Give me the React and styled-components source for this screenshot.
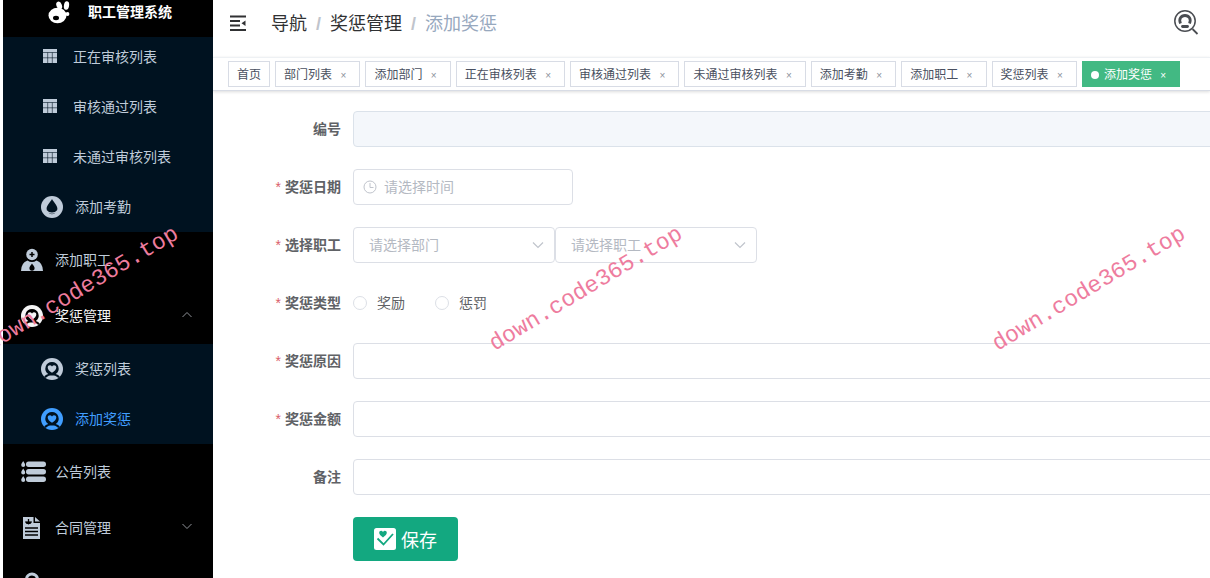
import React, { useState } from "react";
import styled, { createGlobalStyle, css } from "styled-components";

const GlobalStyle = createGlobalStyle`
  * { box-sizing: border-box; }
  body {
    margin: 0;
    background: #fff;
    font-family: "Liberation Sans", "Noto Sans CJK SC", sans-serif;
    color: #606266;
  }
  button, input, select { font-family: inherit; }
`;

const Shell = styled.div`
  position: relative;
  display: flex;
  height: 100vh;
  padding-left: 3px;
  overflow: hidden;
`;

const Sidebar = styled.aside`
  flex: 0 0 210px;
  overflow: hidden;
  background: #000;
`;

const Brand = styled.header`
  position: relative;
  z-index: 1;
  display: flex;
  align-items: flex-start;
  gap: 16px;
  height: 37px;
  margin-bottom: -5px;
  padding-left: 44px;
  background: #000;
`;

const BrandTitle = styled.h1`
  margin: 0;
  color: #fff;
  font-size: 14px;
  font-weight: 700;
  line-height: 24px;
`;

const SubMenu = styled.div`
  background: #001220;
`;

const menuColors = { normal: "#bfcbd9", open: "#f4f4f5", active: "#409eff" };

const MenuLink = styled.a`
  display: flex;
  align-items: center;
  gap: 12px;
  height: ${(p) => (p.$nested ? 50 : 56)}px;
  padding: 0 20px 0 ${(p) => (p.$nested ? 38 : 18)}px;
  color: ${(p) => menuColors[p.$state || "normal"]};
  font-size: 14px;
  line-height: 20px;
  text-decoration: none;
  white-space: nowrap;
`;

const MenuText = styled.span`
  flex: 1;
`;

const Icon = styled.svg`
  display: block;
  flex: none;
  overflow: visible;
`;

const Main = styled.main`
  flex: 1;
  min-width: 0;
  overflow: hidden;
`;

const Navbar = styled.header`
  display: flex;
  align-items: flex-start;
  height: 57px;
  padding: 8px 12px 0 17px;
`;

const IconButton = styled.button`
  display: flex;
  align-items: center;
  height: 30px;
  padding: 0;
  border: 0;
  background: none;
  color: #303133;
`;

const Breadcrumb = styled.nav`
  display: flex;
  flex: 1;
  gap: 9px;
  margin-left: 25px;
  font-size: 18px;
  line-height: 32px;
`;

const Crumb = styled.a`
  color: ${(p) => (p.$current ? "#97a8be" : "#303133")};
  text-decoration: none;
`;

const Slash = styled.span`
  color: #c0c4cc;
  font-weight: 700;
`;

const Tags = styled.nav`
  display: flex;
  gap: 5px;
  height: 34px;
  padding: 3px 15px;
  border-top: 1px solid #eef1f4;
  border-bottom: 1px solid #d8dce5;
  box-shadow: 0 1px 3px rgba(0, 0, 0, 0.14);
`;

const Tag = styled.span`
  flex: none;
  height: 26px;
  padding: 0 8px;
  border: 1px solid #d8dce5;
  background: #fff;
  color: #495060;
  font-size: 12px;
  line-height: 26px;
  white-space: nowrap;
  ${(p) =>
    p.$active &&
    css`
      border-color: #42b983;
      background: #42b983;
      color: #fff;
      &::before {
        content: "";
        display: inline-block;
        width: 8px;
        height: 8px;
        margin-right: 5px;
        border-radius: 50%;
        background: #fff;
      }
    `}
`;

const TagLink = styled.a`
  color: inherit;
  text-decoration: none;
`;

const CloseButton = styled.button`
  width: 16px;
  padding: 0;
  border: 0;
  background: none;
  color: ${(p) => (p.$light ? "#fff" : "#8d929c")};
  font-size: 10px;
  line-height: 16px;
  text-align: center;
`;

const Form = styled.form`
  display: flex;
  flex-direction: column;
  gap: 22px;
  padding: 20px 0 20px 20px;
`;

const Field = styled.div`
  display: flex;
  align-items: center;
  min-height: 36px;
`;

const Label = styled.label`
  flex: 0 0 120px;
  padding-right: 12px;
  font-size: 14px;
  font-weight: 700;
  line-height: 20px;
  text-align: right;
  ${(p) =>
    p.$required &&
    css`
      &::before {
        content: "*";
        margin-right: 4px;
        color: #d9606a;
        font-weight: 400;
      }
    `}
`;

const box = css`
  height: 36px;
  border: 1px solid #dcdfe6;
  border-radius: 4px;
  background: #fff;
  color: #606266;
  font-size: 14px;
`;

const TextInput = styled.input`
  ${box}
  flex: 1;
  min-width: 0;
  margin-right: -8px;
  padding: 0 15px;
  &:disabled {
    background: #f4f7fb;
    border-color: #dbe2ea;
  }
`;

const Picker = styled.span`
  position: relative;
  width: ${(p) => p.$width}px;
  color: #c0c4cc;
`;

const DateInput = styled.input`
  ${box}
  width: 100%;
  padding: 0 10px 0 30px;
  &::placeholder { color: #b4b9c2; }
`;

const Select = styled.select`
  ${box}
  width: 100%;
  padding: 0 30px 0 15px;
  appearance: none;
  color: #b4b9c2;
`;

const Adornment = styled.span`
  position: absolute;
  top: 11px;
  ${(p) => p.$side}: 10px;
  pointer-events: none;
`;

const RadioGroup = styled.div`
  display: flex;
  gap: 30px;
`;

const RadioLabel = styled.label`
  display: flex;
  align-items: center;
  gap: 10px;
  font-size: 14px;
  line-height: 20px;
`;

const Radio = styled.input`
  width: 14px;
  height: 14px;
  margin: 0;
  appearance: none;
  border: 1px solid #dcdfe6;
  border-radius: 50%;
  &:checked { border: 4px solid #409eff; }
`;

const SaveButton = styled.button`
  display: flex;
  align-items: center;
  gap: 5px;
  height: 44px;
  margin-left: 120px;
  padding: 0 21px;
  border: 0;
  border-radius: 4px;
  background: #13a880;
  color: #fff;
  font-size: 18px;
  align-self: flex-start;
`;

const Watermark = styled.span`
  position: absolute;
  top: 50%;
  left: ${(p) => p.$left}%;
  transform: translate(-50%, -50%) rotate(-31deg);
  color: #ee7c9e;
  font-family: "Liberation Mono", monospace;
  font-size: 23px;
  line-height: 28px;
  white-space: nowrap;
  pointer-events: none;
`;

const TableIcon = () => (
  <Icon width="20" height="20" viewBox="0 0 20 20" fill="currentColor">
    <path d="M2 2h14v14H2z" />
    <path d="M2 5.500h14M2 10.800h14M6.700 5.500V16M11.300 5.500V16" stroke="#001220" strokeOpacity="0.65" strokeWidth="0.900" />
  </Icon>
);

const DropIcon = () => (
  <Icon width="22" height="22" viewBox="0 0 22 22">
    <circle cx="11" cy="11" r="11" fill="currentColor" />
    <path d="M11 3C9.500 6 5.600 9.400 5.600 12.800a5.400 5.400 0 0 0 10.800 0C16.400 9.400 12.500 6 11 3z" fill="#001220" />
    <path d="M5.800 14.800c1.600 3 8.800 3 10.400 0" fill="none" stroke="currentColor" strokeWidth="1.200" />
  </Icon>
);

const StaffIcon = () => (
  <Icon width="22" height="22" viewBox="0 0 22 22">
    <circle cx="11" cy="5.500" r="5.800" fill="currentColor" />
    <path d="M11 3v5M8.500 5.500h5" stroke="#000" strokeWidth="1.500" />
    <path d="M6.500 11.500Q11 14.500 15.500 11.500Q22 14 22 22H0Q0 14 6.500 11.500z" fill="currentColor" />
    <path d="M11 14.500c-1 1.800-2.600 3-2.600 4.600a2.600 2.600 0 0 0 5.200 0c0-1.600-1.600-2.800-2.600-4.600z" fill="#000" />
  </Icon>
);

const HeartUserIcon = ({ hole }) => (
  <Icon width="22" height="22" viewBox="0 0 22 22">
    <circle cx="11" cy="11" r="11" fill="currentColor" />
    <path d="M11 4a6.600 6.600 0 0 0-3.800 12c-1.700.5-3 1.400-4 2.700l1.500 1.400c1-1.500 2.600-2.400 4.500-2.700h3.600c1.900.3 3.500 1.200 4.500 2.700l1.500-1.400c-1-1.300-2.300-2.200-4-2.700A6.600 6.600 0 0 0 11 4z" fill={hole} />
    <path d="M11 14.800c-2.800-2-4.300-3.500-4.300-5.400 0-2.300 3-3 4.300-1 1.300-2 4.300-1.300 4.300 1 0 1.900-1.500 3.400-4.300 5.400z" fill="currentColor" />
  </Icon>
);

const NoticeIcon = () => (
  <Icon width="22" height="22" viewBox="0 0 22 22" fill="currentColor">
    {[0, 7.5, 15].map((y) => (
      <g key={y} transform={`translate(0 ${y})`}>
        <path d="M2.200 0C1.600 1.500.2 2.500.2 4a2 2 0 0 0 4 0c0-1.500-1.400-2.500-2-4z" />
        <rect x="5" y="0.500" width="20" height="5.500" rx="2.700" />
      </g>
    ))}
  </Icon>
);

const ContractIcon = () => (
  <Icon width="22" height="22" viewBox="0 0 22 22">
    <path d="M2 0h10.500v6H19v16H2zM14 0l5 4.500h-5z" fill="currentColor" />
    <path d="M4.500 4.500a3.200 3.200 0 0 0 6 0M7.500 2v5M5.600 4.500l1.900 2.200 1.900-2.200M4 11h13M4 14.500h13M4 18h13" fill="none" stroke="#000" strokeWidth="1.300" />
  </Icon>
);

const UserIcon = () => (
  <Icon width="22" height="22" viewBox="0 0 22 22">
    <circle cx="11" cy="6.500" r="5.500" fill="none" stroke="currentColor" strokeWidth="3" />
    <path d="M1 22q1-9 10-9t10 9z" fill="currentColor" />
  </Icon>
);

const RabbitIcon = () => (
  <Icon width="25" height="25" viewBox="0 0 25 25">
    <g fill="#fff">
      <ellipse cx="10.500" cy="15.500" rx="9" ry="7.800" />
      <ellipse cx="12.200" cy="5.500" rx="2.700" ry="4" transform="rotate(-22 12.200 5.500)" />
      <ellipse cx="19.500" cy="5.500" rx="2.600" ry="4.300" transform="rotate(8 19.500 5.500)" />
      <circle cx="20.500" cy="14" r="1.900" />
    </g>
    <ellipse cx="9" cy="18" rx="3" ry="2.200" fill="#000" />
  </Icon>
);

const Chevron = ({ up }) => (
  <Icon width="12" height="12" viewBox="0 0 12 12" fill="none" stroke="#909399">
    <path d={up ? "M1.500 7 6 2.500 10.500 7" : "M1.500 2 6 6.500 10.500 2"} />
  </Icon>
);

const ClockIcon = () => (
  <Icon width="14" height="14" viewBox="0 0 14 14" fill="none" stroke="currentColor">
    <circle cx="7" cy="7" r="6" />
    <path d="M7 3v4.500h3.500" />
  </Icon>
);

const ArrowDown = () => (
  <Icon width="14" height="14" viewBox="0 0 14 14" fill="none" stroke="currentColor" strokeWidth="1.200">
    <path d="M2 4.500l5 5 5-5" />
  </Icon>
);

const attendance = ["正在审核列表", "审核通过列表", "未通过审核列表"];
const tags = ["部门列表", "添加部门", "正在审核列表", "审核通过列表", "未通过审核列表", "添加考勤", "添加职工", "奖惩列表", "添加奖惩"];
const watermarks = [6.8, 48.4, 90];

const MenuItem = ({ icon, label, children, ...rest }) => (
  <MenuLink href="#" {...rest}>
    {icon}
    <MenuText>{label}</MenuText>
    {children}
  </MenuLink>
);

const TextField = ({ id, label, required, disabled }) => (
  <Field>
    <Label htmlFor={id} $required={required}>{label}</Label>
    <TextInput id={id} disabled={disabled} />
  </Field>
);

const SelectBox = ({ id, label }) => (
  <Picker $width={202}>
    <Select id={id} aria-label={label} defaultValue="">
      <option value="">{label}</option>
    </Select>
    <Adornment $side="right"><ArrowDown /></Adornment>
  </Picker>
);

export default function App() {
  const [kind, setKind] = useState("");

  return (
    <>
      <GlobalStyle />
      <Shell>
        <Sidebar>
          <Brand>
            <RabbitIcon />
            <BrandTitle>职工管理系统</BrandTitle>
          </Brand>
          <SubMenu>
            {attendance.map((name) => (
              <MenuItem key={name} $nested icon={<TableIcon />} label={name} />
            ))}
            <MenuItem $nested icon={<DropIcon />} label="添加考勤" />
          </SubMenu>
          <MenuItem icon={<StaffIcon />} label="添加职工" />
          <MenuItem $state="open" icon={<HeartUserIcon hole="#000" />} label="奖惩管理">
            <Chevron up />
          </MenuItem>
          <SubMenu>
            <MenuItem $nested icon={<HeartUserIcon hole="#001220" />} label="奖惩列表" />
            <MenuItem $nested $state="active" icon={<HeartUserIcon hole="#001220" />} label="添加奖惩" />
          </SubMenu>
          <MenuItem icon={<NoticeIcon />} label="公告列表" />
          <MenuItem icon={<ContractIcon />} label="合同管理">
            <Chevron />
          </MenuItem>
          <MenuItem icon={<UserIcon />} label="" />
        </Sidebar>

        <Main>
          <Navbar>
            <IconButton aria-label="折叠菜单">
              <Icon width="16" height="16" viewBox="0 0 16 16" stroke="currentColor" strokeWidth="1.800">
                <path d="M0 1.500h16M0 6h10M0 10.500h10M0 15h16" />
                <path d="M15.500 5.500v5.500L11.500 8.200z" fill="currentColor" stroke="none" />
              </Icon>
            </IconButton>
            <Breadcrumb>
              <Crumb href="#">导航</Crumb>
              <Slash>/</Slash>
              <Crumb href="#">奖惩管理</Crumb>
              <Slash>/</Slash>
              <Crumb href="#" $current>添加奖惩</Crumb>
            </Breadcrumb>
            <IconButton aria-label="搜索">
              <Icon width="24" height="26" viewBox="0 0 24 26" fill="none" stroke="#4a4d52">
                <circle cx="11" cy="11" r="10.200" strokeWidth="1.500" />
                <path d="M18.500 19l5 5" strokeWidth="1.800" />
                <path d="M6.500 13.500c-2-4.500.5-8 4.500-8s6.500 3.500 4.500 8" strokeWidth="2.800" />
                <path d="M8.500 16.500h5" strokeWidth="2.800" strokeLinecap="round" />
              </Icon>
            </IconButton>
          </Navbar>

          <Tags>
            <Tag><TagLink href="#">首页</TagLink></Tag>
            {tags.map((name, i) => {
              const active = i === tags.length - 1;
              return (
                <Tag key={name} $active={active}>
                  <TagLink href="#">{name}</TagLink>{" "}
                  <CloseButton type="button" $light={active} aria-label={`关闭${name}`}>×</CloseButton>
                </Tag>
              );
            })}
          </Tags>

          <Form onSubmit={(e) => e.preventDefault()}>
            <TextField id="number" label="编号" disabled />
            <Field>
              <Label htmlFor="date" $required>奖惩日期</Label>
              <Picker $width={220}>
                <DateInput id="date" placeholder="请选择时间" />
                <Adornment $side="left"><ClockIcon /></Adornment>
              </Picker>
            </Field>
            <Field>
              <Label htmlFor="department" $required>选择职工</Label>
              <SelectBox id="department" label="请选择部门" />
              <SelectBox id="employee" label="请选择职工" />
            </Field>
            <Field>
              <Label as="span" id="kind-label" $required>奖惩类型</Label>
              <RadioGroup role="radiogroup" aria-labelledby="kind-label">
                {["奖励", "惩罚"].map((name) => (
                  <RadioLabel key={name}>
                    <Radio type="radio" name="kind" checked={kind === name} onChange={() => setKind(name)} />
                    {name}
                  </RadioLabel>
                ))}
              </RadioGroup>
            </Field>
            <TextField id="reason" label="奖惩原因" required />
            <TextField id="amount" label="奖惩金额" required />
            <TextField id="remark" label="备注" />
            <SaveButton type="submit">
              <Icon width="22" height="22" viewBox="0 0 22 22">
                <rect width="22" height="22" rx="2.500" fill="#fff" />
                <path d="M9 9.500C6.300 7.500 5.200 6.200 5.200 4.800c0-2.200 2.700-2.600 3.800-.9 1.100-1.700 3.800-1.300 3.800.9 0 1.400-1.100 2.700-3.800 4.700z" fill="#13a880" />
                <path d="M3.500 10.500l6 6L19 6" fill="none" stroke="#13a880" strokeWidth="1.800" />
              </Icon>
              保存
            </SaveButton>
          </Form>
        </Main>

        {watermarks.map((left) => (
          <Watermark key={left} $left={left} aria-hidden="true">down.code365.top</Watermark>
        ))}
      </Shell>
    </>
  );
}
